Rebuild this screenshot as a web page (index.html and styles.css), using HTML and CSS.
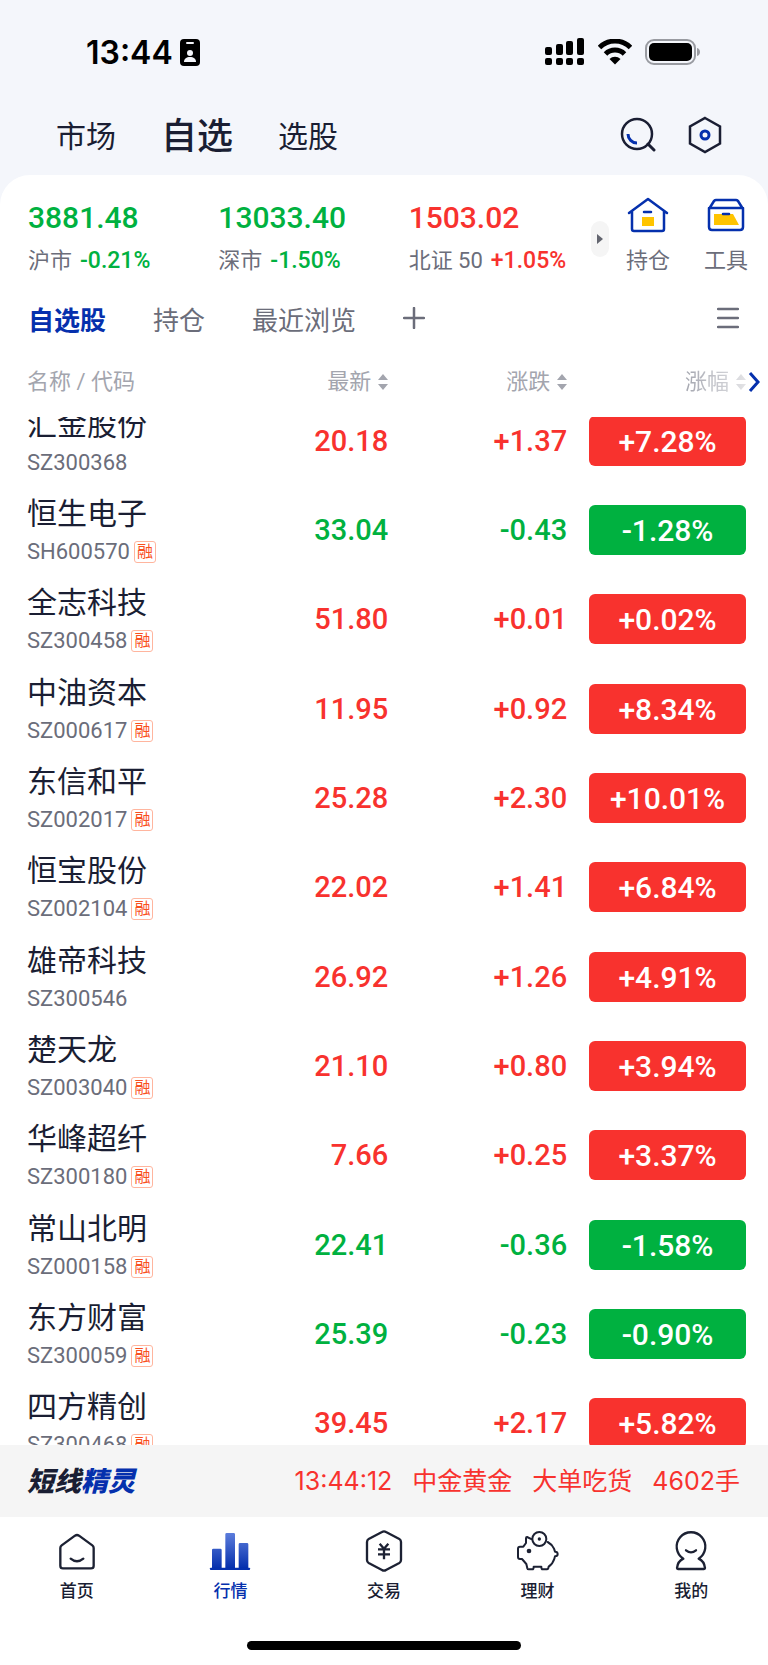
FILE: index.html
```html
<!DOCTYPE html>
<html lang="zh-CN">
<head>
    <meta charset="UTF-8">
    <meta name="viewport" content="width=device-width, initial-scale=1.0">
    <title>自选</title>
    <link rel="stylesheet" href="styles.css">
</head>
<body>
    <div class="status-bar">
        <div class="status-left">
            <span class="clock">13:44</span>
            <svg width="20" height="27" viewBox="0 0 20 27">
                <rect width="20" height="27" rx="4" fill="#000"/>
                <rect x="6" y="3" width="8" height="2" rx="1" fill="#f4f6fb"/>
                <circle cx="10" cy="14" r="3" fill="#f4f6fb"/>
                <path d="M4 23c0-3.500 2.500-5 6-5s6 1.500 6 5z" fill="#f4f6fb"/>
            </svg>
        </div>
        <div class="status-right">
            <svg width="40" height="28" viewBox="0 0 40 28">
                <rect x="0" y="9" width="7" height="8" rx="2"/>
                <rect x="11" y="6" width="7" height="11" rx="2"/>
                <rect x="21" y="3" width="7" height="14" rx="2"/>
                <rect x="32" y="0" width="7" height="17" rx="2"/>
                <rect x="0" y="20" width="7" height="7" rx="2"/>
                <rect x="11" y="20" width="7" height="7" rx="2"/>
                <rect x="21" y="20" width="7" height="7" rx="2"/>
                <rect x="32" y="20" width="7" height="7" rx="2"/>
            </svg>
            <svg width="34" height="26" viewBox="0 0 34 26">
                <path d="M1.500 8.500a22 22 0 0 1 31 0" fill="none" stroke="#000" stroke-width="5"/>
                <path d="M7.500 15a13.500 13.500 0 0 1 19 0" fill="none" stroke="#000" stroke-width="5"/>
                <path d="M17 25.500l-5.500-5.500a8 8 0 0 1 11 0z"/>
            </svg>
            <svg width="56" height="26" viewBox="0 0 56 26">
                <rect x="1" y="1" width="49" height="24" rx="8" fill="none" stroke="#999ba1" stroke-width="2"/>
                <rect x="4" y="4" width="43" height="18" rx="5"/>
                <path d="M52 9c4 1 4 7 0 8z" fill="#999ba1"/>
            </svg>
        </div>
    </div>

    <header class="header">
        <nav class="header-nav">
            <a href="#">市场</a>
            <a href="#" class="active">自选</a>
            <a href="#">选股</a>
        </nav>
        <div class="header-actions">
            <button aria-label="搜索">
                <svg width="36" height="36" viewBox="0 0 36 36" fill="none" stroke-linecap="round">
                    <circle cx="17" cy="17" r="15" stroke="#1a1e33" stroke-width="2.500"/>
                    <path d="M28 27l6 6" stroke="#1a1e33" stroke-width="3"/>
                    <path d="M8 17c0 5 4 9 9 9" stroke="#0530ad" stroke-width="3" stroke-linecap="butt"/>
                </svg>
            </button>
            <button aria-label="设置">
                <svg width="34" height="38" viewBox="0 0 34 38" fill="none">
                    <path d="M17 2l15 8.500v17L17 36 2 27.500v-17z" stroke="#1a1e33" stroke-width="2.500"/>
                    <circle cx="17" cy="19" r="4" stroke="#0530ad" stroke-width="3"/>
                </svg>
            </button>
        </div>
    </header>

    <main class="panel">
        <section class="overview">
            <div class="indexes">
                <div class="index">
                    <div class="index-value down">3881.48</div>
                    <div class="index-info">沪市<span class="down">-0.21%</span></div>
                </div>
                <div class="index">
                    <div class="index-value down">13033.40</div>
                    <div class="index-info">深市<span class="down">-1.50%</span></div>
                </div>
                <div class="index">
                    <div class="index-value up">1503.02</div>
                    <div class="index-info">北证 50<span class="up">+1.05%</span></div>
                </div>
            </div>
            <button class="expand" aria-label="展开">
                <svg width="6" height="10" viewBox="0 0 6 10"><path d="M0 0l6 5-6 5z" fill="#63656f"/></svg>
            </button>
            <a href="#" class="shortcut">
                <svg width="42" height="38" viewBox="0 0 42 38" fill="none" stroke="#0530ad" stroke-width="2.500" stroke-linecap="round" stroke-linejoin="round">
                    <path d="M2 17L21 3l19 14M5 15v18q0 2 2 2h28q2 0 2-2V15"/>
                    <path d="M15 21h12v9H15z" fill="#ffc400" stroke="none"/>
                    <path d="M17 16h7"/>
                </svg>
                持仓
            </a>
            <a href="#" class="shortcut">
                <svg width="42" height="38" viewBox="0 0 42 38" fill="none" stroke="#0530ad" stroke-width="2.500" stroke-linecap="round" stroke-linejoin="round">
                    <path d="M4 13l5-8q1-1 2-1h20q1 0 2 1l5 8M4 12h34v19q0 3-3 3H7q-3 0-3-3z"/>
                    <path d="M9 18h19l6 11H9z" fill="#ffc400" stroke="none"/>
                    <path d="M18 18h6"/>
                </svg>
                工具
            </a>
        </section>

        <div class="groups">
            <button class="active">自选股</button>
            <button>持仓</button>
            <button>最近浏览</button>
            <button aria-label="添加分组">
                <svg width="22" height="22" viewBox="0 0 22 22"><path d="M11 1v20M1 11h20" stroke="#6b6d7a" stroke-width="2.500" stroke-linecap="round"/></svg>
            </button>
            <button class="menu" aria-label="管理">
                <svg width="22" height="22" viewBox="0 0 22 22"><path d="M1 2h20M1 11h20M1 20h20" stroke="#6b6d7a" stroke-width="2.500" stroke-linecap="round"/></svg>
            </button>
        </div>

        <div class="list">
            <table class="stocks">
                <thead>
                    <tr>
                        <th>名称 / 代码</th>
                        <th><button>最新<svg width="10" height="16" viewBox="0 0 10 16"><path d="M5 0l5 6H0zM5 16l5-6H0z"/></svg></button></th>
                        <th><button>涨跌<svg width="10" height="16" viewBox="0 0 10 16"><path d="M5 0l5 6H0zM5 16l5-6H0z"/></svg></button></th>
                        <th class="fade"><button>涨幅<svg width="10" height="16" viewBox="0 0 10 16"><path d="M5 0l5 6H0zM5 16l5-6H0z"/></svg></button></th>
                    </tr>
                </thead>
                <tbody>
                    <tr class="up">
                        <td><div class="name">汇金股份</div><div class="code">SZ300368</div></td>
                        <td>20.18</td><td>+1.37</td><td><span class="badge">+7.28%</span></td>
                    </tr>
                    <tr class="down">
                        <td><div class="name">恒生电子</div><div class="code">SH600570<span class="tag">融</span></div></td>
                        <td>33.04</td><td>-0.43</td><td><span class="badge">-1.28%</span></td>
                    </tr>
                    <tr class="up">
                        <td><div class="name">全志科技</div><div class="code">SZ300458<span class="tag">融</span></div></td>
                        <td>51.80</td><td>+0.01</td><td><span class="badge">+0.02%</span></td>
                    </tr>
                    <tr class="up">
                        <td><div class="name">中油资本</div><div class="code">SZ000617<span class="tag">融</span></div></td>
                        <td>11.95</td><td>+0.92</td><td><span class="badge">+8.34%</span></td>
                    </tr>
                    <tr class="up">
                        <td><div class="name">东信和平</div><div class="code">SZ002017<span class="tag">融</span></div></td>
                        <td>25.28</td><td>+2.30</td><td><span class="badge">+10.01%</span></td>
                    </tr>
                    <tr class="up">
                        <td><div class="name">恒宝股份</div><div class="code">SZ002104<span class="tag">融</span></div></td>
                        <td>22.02</td><td>+1.41</td><td><span class="badge">+6.84%</span></td>
                    </tr>
                    <tr class="up">
                        <td><div class="name">雄帝科技</div><div class="code">SZ300546</div></td>
                        <td>26.92</td><td>+1.26</td><td><span class="badge">+4.91%</span></td>
                    </tr>
                    <tr class="up">
                        <td><div class="name">楚天龙</div><div class="code">SZ003040<span class="tag">融</span></div></td>
                        <td>21.10</td><td>+0.80</td><td><span class="badge">+3.94%</span></td>
                    </tr>
                    <tr class="up">
                        <td><div class="name">华峰超纤</div><div class="code">SZ300180<span class="tag">融</span></div></td>
                        <td>7.66</td><td>+0.25</td><td><span class="badge">+3.37%</span></td>
                    </tr>
                    <tr class="down">
                        <td><div class="name">常山北明</div><div class="code">SZ000158<span class="tag">融</span></div></td>
                        <td>22.41</td><td>-0.36</td><td><span class="badge">-1.58%</span></td>
                    </tr>
                    <tr class="down">
                        <td><div class="name">东方财富</div><div class="code">SZ300059<span class="tag">融</span></div></td>
                        <td>25.39</td><td>-0.23</td><td><span class="badge">-0.90%</span></td>
                    </tr>
                    <tr class="up">
                        <td><div class="name">四方精创</div><div class="code">SZ300468<span class="tag">融</span></div></td>
                        <td>39.45</td><td>+2.17</td><td><span class="badge">+5.82%</span></td>
                    </tr>
                </tbody>
            </table>
            <svg class="more" width="12" height="20" viewBox="0 0 12 20"><path d="M2 1l8 9-8 9" fill="none" stroke="#0530ad" stroke-width="3"/></svg>
        </div>
    </main>

    <div class="ticker">
        <div class="ticker-logo">短线<span>精灵</span></div>
        <div class="ticker-news">
            <span>13:44:12</span>
            <span>中金黄金</span>
            <span>大单吃货</span>
            <span>4602手</span>
        </div>
    </div>

    <nav class="tab-bar">
        <a href="#">
            <svg width="44" height="42" viewBox="0 0 132 126" fill="none" stroke="#1c2133" stroke-width="7" stroke-linecap="round" stroke-linejoin="round">
                <path d="M60 17q6-4 12 0l40 29q4 3 4 8v53q0 8-8 8H24q-8 0-8-8V54q0-5 4-8z"/>
                <path d="M47 86q19 16 38 0"/>
            </svg>
            首页
        </a>
        <a href="#" class="active">
            <svg width="44" height="42" viewBox="0 0 132 126">
                <defs>
                    <linearGradient id="bars" gradientUnits="userSpaceOnUse" x1="0" y1="10" x2="0" y2="114">
                        <stop offset="0" stop-color="#5b7cdb"/>
                        <stop offset="1" stop-color="#0530ad"/>
                    </linearGradient>
                </defs>
                <path d="M12 114V60q0-4 4-4h21q4 0 4 4v54zM52 114V13q0-4 4-4h21q4 0 4 4v101zM92 114V43q0-4 4-4h21q4 0 4 4v71z" fill="url(#bars)"/>
                <rect x="6" y="113" width="120" height="7" rx="2" fill="#0530ad"/>
            </svg>
            行情
        </a>
        <a href="#">
            <svg width="44" height="42" viewBox="0 0 132 126" fill="none" stroke="#1c2133" stroke-width="7" stroke-linecap="round" stroke-linejoin="round">
                <path d="M60 6q6-4 12 0l40 21q5 3 5 9v54q0 6-5 9l-40 21q-6 4-12 0L20 99q-5-3-5-9V36q0-6 5-9z"/>
                <path d="M53 41l13 15 13-15M66 56v32M48 58h36M48 73h36" stroke-linecap="butt"/>
            </svg>
            交易
        </a>
        <a href="#">
            <svg width="44" height="42" viewBox="0 0 132 126" fill="none" stroke="#1c2133" stroke-width="6" stroke-linecap="round" stroke-linejoin="round">
                <circle cx="70" cy="27" r="21"/>
                <circle cx="70" cy="27" r="5" fill="#1c2133" stroke="none"/>
                <circle cx="39" cy="63" r="7" fill="#1c2133" stroke="none"/>
                <path d="M48 28l-15-7q-3 0-3 4v14l-8 11H12q-6 0-6 6v25q0 6 6 6h6l13 15 3 13q1 3 4 3h11q4 0 4-8h23q0 8 4 8h13q4 0 5-8 13-10 17-24l2-7q8 0 8-7t-8-7l-3-9q-6-13-19-20"/>
            </svg>
            理财
        </a>
        <a href="#">
            <svg width="44" height="42" viewBox="0 0 132 126" fill="none" stroke="#1c2133" stroke-width="7" stroke-linecap="round" stroke-linejoin="round">
                <path d="M43 86a43 43 0 1 1 46 0q17 8 19 28 0 3-3 3H27q-3 0-3-3 2-20 19-28z"/>
                <path d="M51 61q15 12 30 0"/>
            </svg>
            我的
        </a>
    </nav>
    <div class="home-indicator"></div>
</body>
</html>
```

FILE: styles.css
```css
* {
    box-sizing: border-box;
}
body {
    margin: 0;
    height: 100vh;
    display: flex;
    flex-direction: column;
    background-color: #f4f6fb;
    color: #1a1e33;
    font-family: Roboto, "Noto Sans CJK SC", sans-serif;
}
a {
    color: inherit;
    text-decoration: none;
}
button {
    padding: 0;
    border: 0;
    background: none;
    color: inherit;
    font: inherit;
}
svg {
    display: block;
    flex-shrink: 0;
}
.up {
    color: #f8322e;
}
.down {
    color: #00b140;
}

/* status bar */
.status-bar {
    height: 100px;
    padding: 4px 67px 0 86px;
    display: flex;
    justify-content: space-between;
    align-items: center;
}
.status-left {
    display: flex;
    align-items: center;
    gap: 7px;
}
.status-right {
    display: flex;
    align-items: center;
    gap: 13px;
}
.clock {
    color: #000;
    font-family: Inter, sans-serif;
    font-size: 32px;
    font-weight: 600;
}

/* header */
.header {
    height: 75px;
    padding: 0 46px 5px 56px;
    display: flex;
    justify-content: space-between;
    align-items: center;
}
.header-nav {
    display: flex;
    align-items: center;
    gap: 45px;
    font-size: 30px;
    line-height: 40px;
}
.header-nav a {
    padding-top: 3px;
}
.header-nav .active {
    font-size: 36px;
    font-weight: 500;
}
.header-actions {
    display: flex;
    align-items: center;
    gap: 32px;
}

.panel {
    flex: 1;
    min-height: 0;
    display: flex;
    flex-direction: column;
    background-color: #fff;
    border-radius: 30px 30px 0 0;
}

/* indexes */
.overview {
    padding: 21px 20px 7px 28px;
    display: flex;
    align-items: center;
}
.indexes {
    flex: 1;
    display: grid;
    grid-template-columns: repeat(3, 1fr);
    gap: 8px;
}
.index {
    white-space: nowrap;
}
.index-value {
    font-size: 30px;
    font-weight: 500;
    line-height: 44px;
}
.index-info {
    display: flex;
    gap: 8px;
    color: #6b6d7a;
    font-size: 22px;
    line-height: 42px;
}
.index-info span {
    font-size: 23px;
    font-weight: 500;
}
.expand {
    width: 18px;
    height: 36px;
    display: flex;
    justify-content: center;
    align-items: center;
    background-color: #f5f5f5;
    border-radius: 9px;
}
.shortcut {
    width: 44px;
    margin-left: 17px;
    display: flex;
    flex-direction: column;
    align-items: center;
    gap: 6px;
    color: #6b6d7a;
    font-size: 22px;
    line-height: 42px;
}
.shortcut + .shortcut {
    margin-left: 34px;
}

/* groups */
.groups {
    height: 64px;
    padding: 0 29px 6px 28px;
    display: flex;
    align-items: center;
    gap: 47px;
    color: #6b6d7a;
    font-size: 26px;
}
.groups .active {
    color: #0530ad;
    font-weight: 700;
}
.groups .menu {
    margin-left: auto;
}

/* stock list */
.list {
    position: relative;
    flex: 1;
    min-height: 0;
    overflow: hidden;
}
.stocks,
.stocks thead {
    display: block;
}
.stocks tr {
    padding: 0 22px 0 27px;
    display: grid;
    grid-template-columns: 1.02fr 1fr 1fr 1fr;
    align-items: center;
}
.stocks th,
.stocks td {
    padding: 0;
    text-align: right;
}
.stocks th:first-child,
.stocks td:first-child {
    text-align: left;
}
.stocks thead {
    position: relative;
    z-index: 1;
    height: 64px;
    background-color: #fff;
}
.stocks th {
    color: #a3a5ae;
    font-size: 22px;
    font-weight: 400;
    line-height: 58px;
}
.stocks th button {
    display: flex;
    align-items: center;
    gap: 7px;
    margin-left: auto;
}
.stocks th svg {
    fill: #a3a5ae;
}
.stocks .fade {
    -webkit-mask-image: linear-gradient(to right, #000 65%, rgba(0, 0, 0, 0.3));
    mask-image: linear-gradient(to right, #000 65%, rgba(0, 0, 0, 0.3));
}
/* list is scrolled a little, first row sits under the head */
.stocks tbody {
    height: 1072px;
    margin-top: -22px;
    display: grid;
    grid-auto-rows: 1fr;
}
.stocks td {
    font-size: 29px;
    font-weight: 500;
    line-height: 38px;
}
.stocks td + td {
    padding-top: 2px;
}
.name {
    padding-top: 8px;
    color: #1a1e33;
    font-size: 30px;
    font-weight: 400;
}
.code {
    display: flex;
    align-items: center;
    gap: 4px;
    color: #6b6d7a;
    font-size: 22px;
    font-weight: 400;
}
.tag {
    width: 22px;
    height: 22px;
    border: 1px solid #ffb59e;
    border-radius: 3px;
    color: #f9501e;
    font-size: 16px;
    line-height: 20px;
    text-align: center;
}
.badge {
    display: block;
    margin-left: 22px;
    padding-top: 2px;
    border-radius: 6px;
    background-color: #f8322e;
    color: #fff;
    font-size: 30px;
    line-height: 48px;
    text-align: center;
}
.down .badge {
    background-color: #00b140;
}
.more {
    position: absolute;
    top: 19px;
    right: 8px;
    z-index: 2;
}

/* ticker */
.ticker {
    height: 72px;
    padding: 0 28px 4px 27px;
    display: flex;
    justify-content: space-between;
    align-items: center;
    background-color: #f5f5f5;
}
.ticker-logo {
    font-size: 27px;
    font-style: italic;
    font-weight: 900;
}
.ticker-logo span {
    color: #0530ad;
}
.ticker-news {
    display: flex;
    align-items: baseline;
    gap: 20px;
    color: #f8322e;
    font-family: Inter, "Noto Sans CJK SC", sans-serif;
    font-size: 25px;
}

/* bottom tabs */
.tab-bar {
    height: 124px;
    padding-top: 13px;
    display: grid;
    grid-template-columns: repeat(5, 1fr);
    background-color: #fff;
}
.tab-bar a {
    display: flex;
    flex-direction: column;
    align-items: center;
    gap: 7px;
    font-size: 17px;
    font-weight: 500;
    line-height: 24px;
}
.tab-bar .active {
    color: #0530ad;
}
.home-indicator {
    height: 24px;
    background-color: #fff;
}
.home-indicator::before {
    content: "";
    display: block;
    width: 274px;
    height: 9px;
    margin: 0 auto;
    border-radius: 5px;
    background-color: #000;
}
```
